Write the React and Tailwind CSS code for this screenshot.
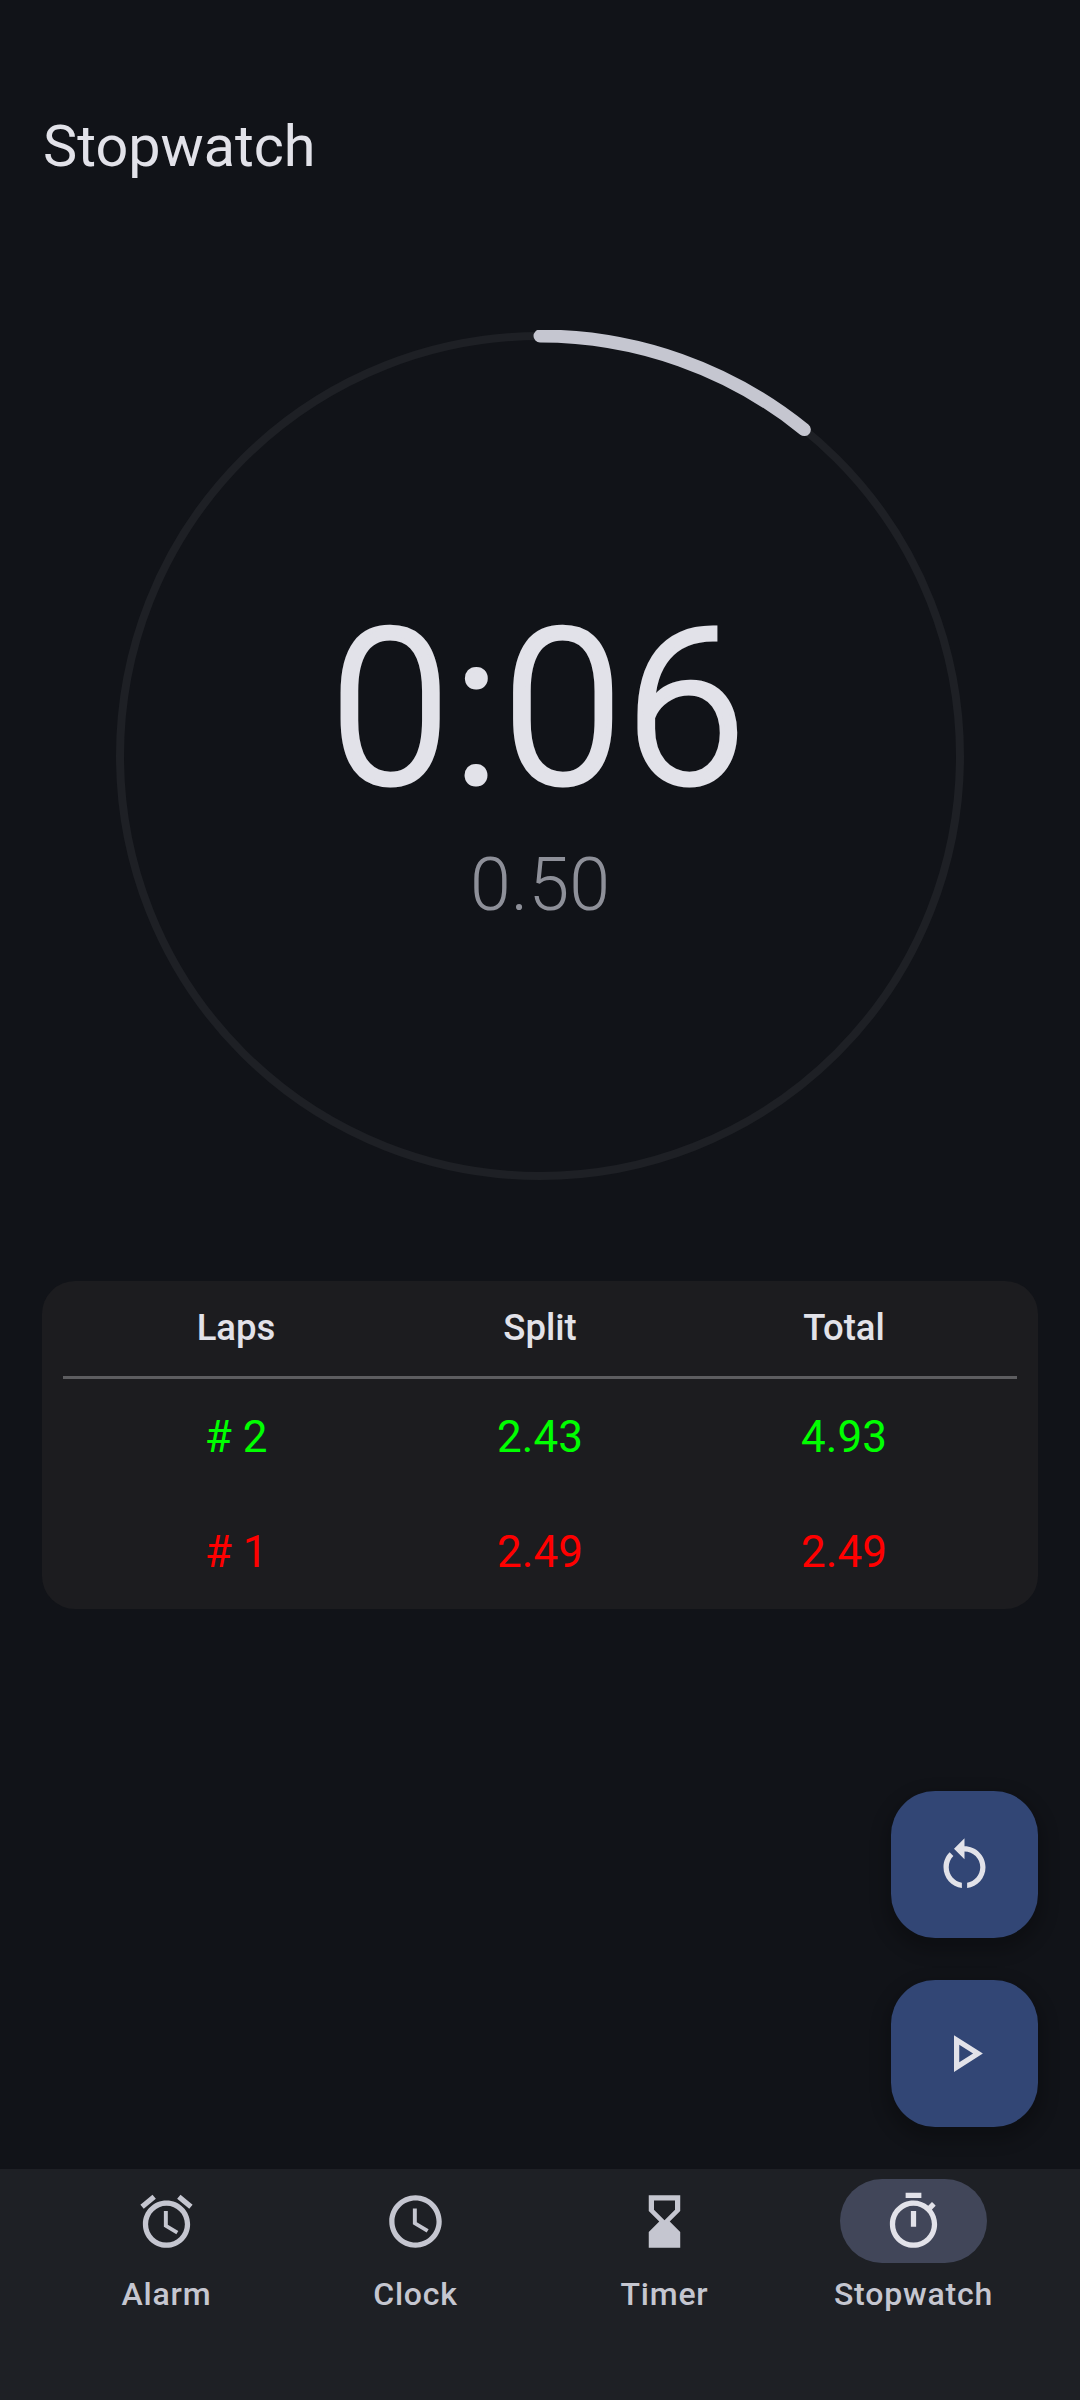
import React from "react";

const P = {
  alarm: "M12.5 8H11v6l4.75 2.85.75-1.23-4-2.37V8zm4.837-6.19l4.607 3.845-1.28 1.535-4.61-3.843zm-10.674 0l1.282 1.536L3.337 7.19l-1.28-1.536zM12 4c-4.97 0-9 4.03-9 9s4.03 9 9 9 9-4.03 9-9-4.03-9-9-9zm0 16c-3.86 0-7-3.14-7-7s3.14-7 7-7 7 3.14 7 7-3.14 7-7 7z",
  clock: "M11.99 2C6.47 2 2 6.48 2 12s4.47 10 9.99 10C17.52 22 22 17.52 22 12S17.52 2 11.99 2zM12 20c-4.42 0-8-3.58-8-8s3.58-8 8-8 8 3.58 8 8-3.58 8-8 8zm.5-13H11v6l5.25 3.15.75-1.23-4.5-2.67z",
  timer: "M18 22l-.01-6L14 12l3.99-4.01L18 2H6v6l4 4-4 3.99V22h12zM8 7.5V4h8v3.5l-4 4-4-4z",
  stopwatch: "M15 1H9v2h6V1zm-4 13h2V8h-2v6zm8.03-6.61l1.42-1.42c-.43-.51-.9-.99-1.41-1.41l-1.42 1.42C16.07 4.74 14.12 4 12 4c-4.97 0-9 4.03-9 9s4.02 9 9 9 9-4.03 9-9c0-2.12-.74-4.07-1.97-5.61zM12 20c-3.87 0-7-3.13-7-7s3.13-7 7-7 7 3.13 7 7-3.13 7-7 7z",
  restart: "M12 5V2L8 6l4 4V7c3.31 0 6 2.69 6 6 0 2.97-2.17 5.43-5 5.91v2.02c3.95-.49 7-3.85 7-7.93 0-4.42-3.58-8-8-8zm-6 8c0-1.65.67-3.15 1.76-4.24L6.34 7.34C4.9 8.79 4 10.79 4 13c0 4.08 3.05 7.44 7 7.93v-2.02c-2.83-.48-5-2.94-5-5.91z",
  play: "M10 8.64L15.27 12 10 15.36V8.64M8 5v14l11-7L8 5z",
};

function Icon({ d, className }) {
  return (
    <svg viewBox="0 0 24 24" fill="currentColor" className={className}>
      <path d={d} />
    </svg>
  );
}

function Fab({ d }) {
  return (
    <div className="w-[147px] h-[147px] rounded-[44px] bg-[#324675] text-[#e2e2e9] flex items-center justify-center shadow-[0_8px_16px_6px_rgba(0,0,0,0.22)]">
      <Icon d={d} className="w-[63px] h-[63px]" />
    </div>
  );
}

function Row({ cells, color }) {
  return (
    <div className={`grid grid-cols-3 h-[115px] items-center text-center text-[44px] leading-none ${color}`}>
      {cells.map((c, i) => (
        <span key={i}>{c}</span>
      ))}
    </div>
  );
}

function NavItem({ d, label, active }) {
  return (
    <div className="flex flex-col items-center">
      <div className={`w-[147px] h-[84px] rounded-full flex items-center justify-center ${active ? "bg-[#414659] text-[#e2e2e9]" : "text-[#c5c6d0]"}`}>
        <Icon d={d} className="w-[63px] h-[63px]" />
      </div>
      <span className="mt-[9px] text-[32px] leading-[44px] font-medium tracking-[0.8px] text-[#c5c6d0]">{label}</span>
    </div>
  );
}

export default function App() {
  const r = 420;
  const c = 426;
  const a = (39 * Math.PI) / 180;
  const ex = c + r * Math.sin(a);
  const ey = c - r * Math.cos(a);
  return (
    <div className="w-[1080px] h-[2400px] bg-[#111318] flex flex-col overflow-hidden" style={{ fontFamily: "Roboto, sans-serif" }}>
      <h1 className="pt-[112px] pl-[43px] text-[57.5px] leading-[70px] font-normal text-[#e2e2e9]">Stopwatch</h1>

      <div className="relative self-center mt-[148px] w-[852px] h-[852px]">
        <svg viewBox="0 0 852 852" className="w-full h-full" fill="none">
          <circle cx={c} cy={c} r={r} stroke="#1e2025" strokeWidth="8" />
          <path d={`M${c} ${c - r} A${r} ${r} 0 0 1 ${ex} ${ey}`} stroke="#c5c6d0" strokeWidth="13" strokeLinecap="round" />
        </svg>
        <div className="absolute inset-0 flex flex-col items-center">
          <span className="mt-[246px] text-[215px] leading-[267px] font-light tracking-[4px] text-[#e2e2e9] [-webkit-text-stroke:5px_#e2e2e9]">0:06</span>
          <span className="mt-[-2px] text-[73.5px] leading-[88px] font-light text-[#8e9099]">0.50</span>
        </div>
      </div>

      <div className="mx-[42px] mt-[99px] h-[328px] rounded-[33px] bg-[#1c1c1f]">
        <div className="grid grid-cols-3 px-[42px] h-[95px] items-center text-center text-[36.5px] leading-none font-medium text-[#e2e2e9]">
          <span>Laps</span>
          <span>Split</span>
          <span>Total</span>
        </div>
        <div className="mx-[21px] h-[3px] bg-[#5d5d60]" />
        <div className="px-[42px]">
          <Row cells={["# 2", "2.43", "4.93"]} color="text-[#00ff00]" />
          <Row cells={["# 1", "2.49", "2.49"]} color="text-[#ff0000]" />
        </div>
      </div>

      <div className="mt-auto mr-[42px] mb-[42px] self-end flex flex-col gap-[42px]">
        <Fab d={P.restart} />
        <Fab d={P.play} />
      </div>

      <nav className="h-[231px] shrink-0 bg-[#1e2025] px-[42px] pt-[10px] grid grid-cols-4">
        <NavItem d={P.alarm} label="Alarm" />
        <NavItem d={P.clock} label="Clock" />
        <NavItem d={P.timer} label="Timer" />
        <NavItem d={P.stopwatch} label="Stopwatch" active />
      </nav>
    </div>
  );
}
